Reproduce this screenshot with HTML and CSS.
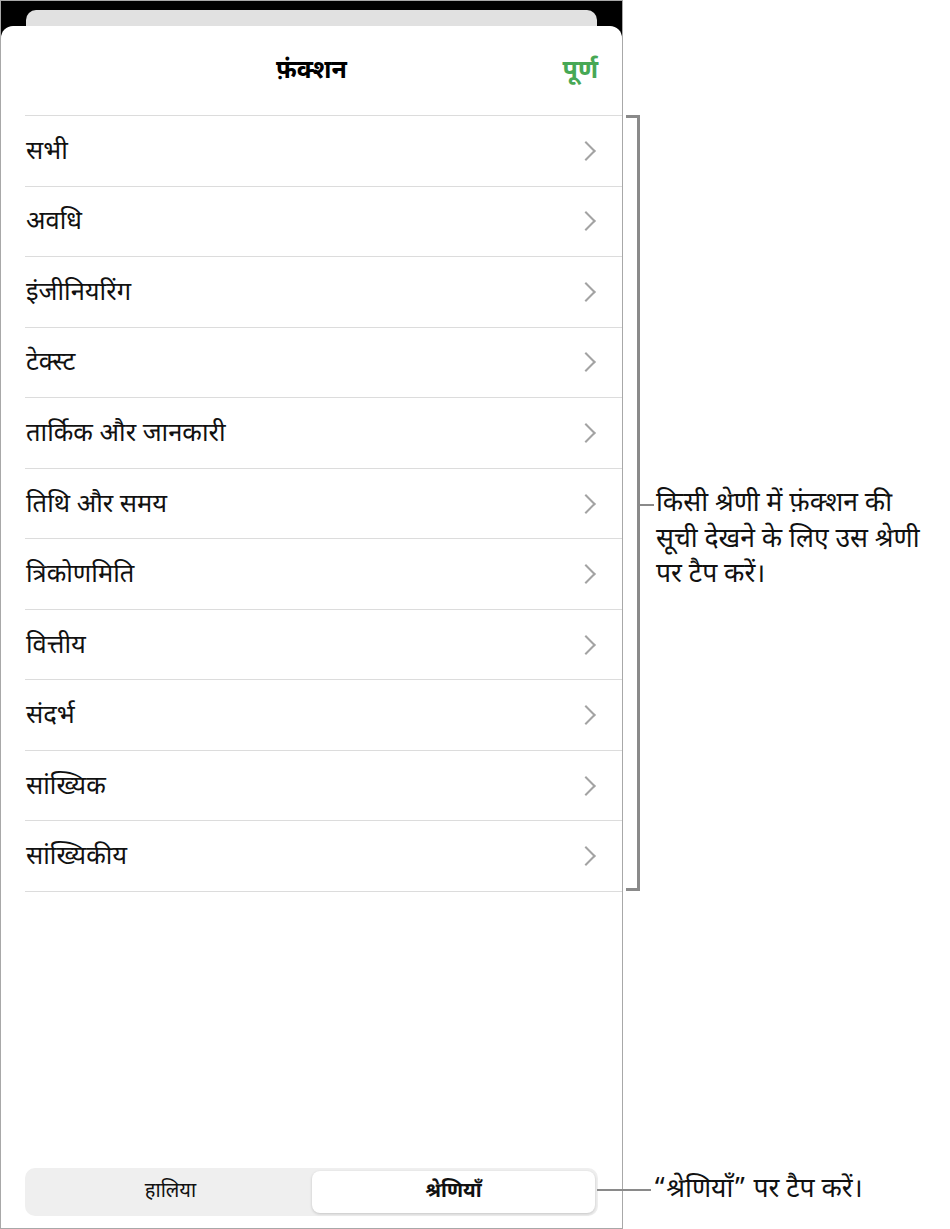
FILE: index.html
```html
<!DOCTYPE html>
<html lang="hi">
<head>
    <meta charset="UTF-8">
    <meta name="viewport" content="width=device-width, initial-scale=1.0">
    <title>फ़ंक्शन</title>
    <link rel="stylesheet" href="styles.css">
</head>
<body>
    <div class="page">
        <div class="sheet">
            <div class="backcard"></div>
            <div class="panel">
                <header class="bar">
                    <h1 class="title">फ़ंक्शन</h1>
                    <button class="done">पूर्ण</button>
                </header>

                <ul class="list">
                    <li class="row"><span>सभी</span><span class="chev"></span></li>
                    <li class="row"><span>अवधि</span><span class="chev"></span></li>
                    <li class="row"><span>इंजीनियरिंग</span><span class="chev"></span></li>
                    <li class="row"><span>टेक्स्ट</span><span class="chev"></span></li>
                    <li class="row"><span>तार्किक और जानकारी</span><span class="chev"></span></li>
                    <li class="row"><span>तिथि और समय</span><span class="chev"></span></li>
                    <li class="row"><span>त्रिकोणमिति</span><span class="chev"></span></li>
                    <li class="row"><span>वित्तीय</span><span class="chev"></span></li>
                    <li class="row"><span>संदर्भ</span><span class="chev"></span></li>
                    <li class="row"><span>सांख्यिक</span><span class="chev"></span></li>
                    <li class="row"><span>सांख्यिकीय</span><span class="chev"></span></li>
                </ul>

                <div class="segments">
                    <button class="seg">हालिया</button>
                    <button class="seg active">श्रेणियाँ</button>
                </div>
            </div>
        </div>

        <div class="notes">
            <div class="callout">
                <div class="bracket"></div>
                <div class="pointer">
                    <span class="tick"></span>
                    <p class="note">किसी श्रेणी में फ़ंक्शन की<br>सूची देखने के लिए उस श्रेणी<br>पर टैप करें।</p>
                </div>
            </div>

            <div class="callout-bottom">
                <span class="line"></span>
                <p class="note">“श्रेणियाँ” पर टैप करें।</p>
            </div>
        </div>
    </div>
</body>
</html>
```

FILE: styles.css
```css
* {
    box-sizing: border-box;
}

body {
    margin: 0;
    background: #fff;
    font-family: "Noto Sans Devanagari", "Noto Sans", "Lohit Devanagari", sans-serif;
    color: #111;
}

.page {
    display: flex;
    width: 950px;
    height: 1229px;
}

/* left: the popover sheet */
.sheet {
    width: 623px;
    height: 1229px;
    display: flex;
    flex-direction: column;
    background: #000;
    border: 1px solid #a8a8a8;
}

.backcard {
    height: 16px;
    margin: 9px 25px 0 25px;
    background: #e1e1e1;
    border-radius: 10px 10px 0 0;
}

.panel {
    flex: 1;
    display: flex;
    flex-direction: column;
    background: #fff;
    border-radius: 12px 12px 0 0;
}

.bar {
    height: 89px;
    position: relative;
    display: flex;
    align-items: center;
    justify-content: center;
    padding-top: 2px;
}

.title {
    margin: 0;
    font-size: 25px;
    font-weight: 700;
    color: #000;
}

.done {
    position: absolute;
    right: 24px;
    top: 50%;
    transform: translateY(-48%);
    border: none;
    background: none;
    padding: 0;
    font-family: inherit;
    font-size: 25px;
    font-weight: 700;
    color: #47a855;
}

.list {
    list-style: none;
    margin: 0 0 0 24px;
    padding: 0;
    border-top: 1px solid #dcdcdc;
}

.row {
    height: 70.55px;
    display: flex;
    align-items: center;
    justify-content: space-between;
    padding: 3px 27px 0 1px;
    border-bottom: 1px solid #dcdcdc;
    font-size: 25.5px;
    font-weight: 400;
}

.chev {
    width: 14px;
    height: 14px;
    border-top: 2px solid #a3a3a3;
    border-right: 2px solid #a3a3a3;
    transform: rotate(45deg);
    margin-right: 2px;
    margin-top: -3px;
}

.segments {
    margin: auto 24px 12px 24px;
    height: 48px;
    display: flex;
    padding: 3px 3px 3px 4px;
    background: #efefef;
    border-radius: 10px;
}

.seg {
    flex: 1;
    border: none;
    background: none;
    font-family: inherit;
    font-size: 20px;
    color: #111;
    border-radius: 8px;
}

.seg.active {
    font-weight: 700;
    background: #fff;
    box-shadow: 0 1px 3px rgba(0, 0, 0, 0.18);
}

/* right: annotations */
.notes {
    flex: 1;
    display: flex;
    flex-direction: column;
    padding: 115px 0 21px 0;
}

.callout {
    display: flex;
    align-items: flex-start;
}

.bracket {
    width: 14px;
    height: 776px;
    margin-left: 3px;
    border: 3px solid #8a8a8a;
    border-left: none;
}

.pointer {
    display: flex;
    align-items: flex-start;
    margin-top: 372px;
}

.tick {
    width: 14px;
    height: 2px;
    margin-top: 17px;
    background: #8a8a8a;
}

.note {
    margin: 0 0 0 2px;
    font-size: 26.5px;
    line-height: 35.5px;
    color: #111;
    white-space: nowrap;
}

.callout-bottom {
    margin-top: auto;
    margin-left: -26px;
    display: flex;
    align-items: center;
}

.line {
    width: 54px;
    height: 2px;
    background: #8a8a8a;
}
```
